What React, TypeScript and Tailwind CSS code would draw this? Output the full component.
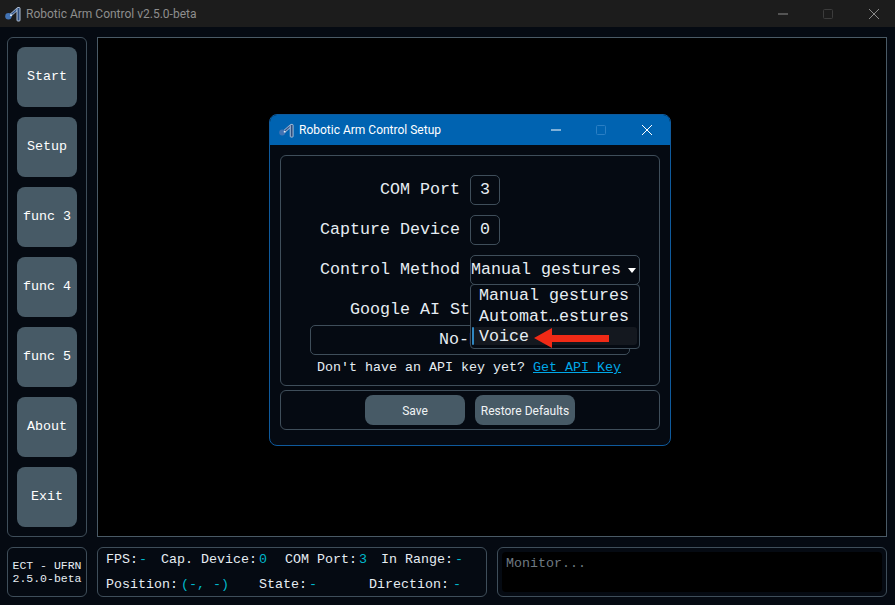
import React from "react";

const sideButtons = ["Start", "Setup", "func 3", "func 4", "func 5", "About", "Exit"];

function ArmIcon({ className }: { className?: string }) {
  return (
    <svg viewBox="0 0 16 16" className={className} fill="none">
      <path d="M4 10.5 L12.5 3" stroke="#a9bcd6" strokeWidth="3" />
      <path d="M4 10.5 L12.5 3" stroke="#34568a" strokeWidth="1.4" />
      <rect x="12" y="1.5" width="3" height="13.5" rx="0.8" fill="#2d4d7e" stroke="#c3d2e6" strokeWidth="0.9" />
      <circle cx="3.4" cy="10.2" r="3.2" fill="#4273b4" />
      <circle cx="6" cy="9.2" r="1" fill="#e6edf5" />
    </svg>
  );
}

function WindowControls({ color, dim, maxLeft, closeLeft }: { color: string; dim: string; maxLeft: string; closeLeft: string }) {
  return (
    <div className="ml-auto flex items-center">
      <svg viewBox="0 0 10 10" className="h-[10px] w-[10px]">
        <path d="M0 5 H10" stroke={color} strokeWidth="1" />
      </svg>
      <svg viewBox="0 0 10 10" className={`h-[10px] w-[10px] ${maxLeft}`}>
        <rect x="0.5" y="0.5" width="9" height="9" rx="1" fill="none" stroke={dim} strokeWidth="1" />
      </svg>
      <svg viewBox="0 0 10 10" className={`h-[10px] w-[10px] ${closeLeft}`}>
        <path d="M0 0 L10 10 M10 0 L0 10" stroke={color} strokeWidth="1" />
      </svg>
    </div>
  );
}

function Stat({ label, value, className }: { label: string; value: string; className?: string }) {
  return (
    <div className={`flex gap-[1px] ${className ?? ""}`}>
      <span className="text-[#e6edf3]">{label}</span>
      <span className="text-[#00b8cc]">{value}</span>
    </div>
  );
}

function FormRow({ label, children }: { label: string; children: React.ReactNode }) {
  return (
    <div className="flex h-[30px] items-center">
      <div className="w-[189px] pr-[10px] text-right">{label}</div>
      {children}
    </div>
  );
}

export default function App() {
  return (
    <div
      className="relative flex h-[605px] w-[895px] flex-col overflow-hidden bg-[#050a12] text-[13.33px] text-[#e6edf3]"
      style={{ fontFamily: '"Liberation Mono", monospace' }}
    >
      {/* title bar */}
      <div className="flex h-[27px] shrink-0 items-center bg-[#1c1c1c] pl-[5px] pr-[16px] font-['Roboto',sans-serif] text-[12px] text-[#8e8e8e]">
        <ArmIcon className="h-[16px] w-[16px]" />
        <span className="ml-[5px]">Robotic Arm Control v2.5.0-beta</span>
        <WindowControls color="#8a8a8a" dim="#3c3c3c" maxLeft="ml-[35px]" closeLeft="ml-[36px]" />
      </div>

      {/* main */}
      <div className="flex flex-1 flex-col gap-[10px] pb-[8px] pl-[7px] pr-[8px] pt-[10px]">
        <div className="flex h-[500px] gap-[10px]">
          <div className="flex w-[80px] flex-col items-center gap-[10px] rounded-[6px] border border-[#3f4e5a] pt-[9px]">
            {sideButtons.map((b) => (
              <button key={b} className="h-[60px] w-[60px] rounded-[8px] bg-[#475a66] text-center text-white">
                {b}
              </button>
            ))}
          </div>
          <div className="flex-1 border border-[#4a5a66] bg-black" />
        </div>

        {/* bottom */}
        <div className="flex h-[50px] gap-[10px]">
          <div className="flex w-[80px] flex-col items-center justify-center rounded-[6px] border border-[#3f4e5a] text-[11.5px] leading-[13px] text-[#e6edf3]">
            <span>ECT - UFRN</span>
            <span>2.5.0-beta</span>
          </div>
          <div className="flex w-[390px] flex-col justify-between rounded-[6px] border border-[#3f4e5a] pb-[2px] pl-[8px] pt-[3px] leading-[18px]">
            <div className="flex">
              <Stat label="FPS:" value="-" className="w-[55px]" />
              <Stat label="Cap. Device:" value="0" className="w-[124px] gap-[2px]" />
              <Stat label="COM Port:" value="3" className="w-[96px] gap-[2px]" />
              <Stat label="In Range:" value="-" className="gap-[2px]" />
            </div>
            <div className="flex">
              <Stat label="Position:" value="(-, -)" className="w-[153px] gap-[3px]" />
              <Stat label="State:" value="-" className="w-[110px] gap-[2px]" />
              <Stat label="Direction:" value="-" className="gap-[4px]" />
            </div>
          </div>
          <div className="flex-1 rounded-[6px] border border-[#3f4e5a] p-[4px]">
            <div className="h-full rounded-[4px] bg-black px-[4px] py-[3px] leading-[18px] text-[#6f7a82]">Monitor...</div>
          </div>
        </div>
      </div>

      {/* setup dialog */}
      <div className="absolute left-[269px] top-[114px] flex h-[332px] w-[402px] flex-col overflow-hidden rounded-[8px] border border-[#0f5a9c] bg-[#050a12]">
        <div className="flex h-[30px] shrink-0 items-center bg-[#0063b1] pl-[9px] pr-[18px] font-['Roboto',sans-serif] text-[12px] text-white">
          <ArmIcon className="h-[15px] w-[15px]" />
          <span className="ml-[5px]">Robotic Arm Control Setup</span>
          <WindowControls color="#ffffff" dim="#2a7fc4" maxLeft="ml-[35px]" closeLeft="ml-[36px]" />
        </div>
        <div className="flex flex-1 flex-col gap-[4px] px-[10px] pt-[10px]">
          <div className="flex h-[231px] flex-col gap-[10px] rounded-[6px] border border-[#3f4e5a] pt-[19px] text-[16.67px] leading-none text-[#e6edf3]">
            <FormRow label="COM Port">
              <div className="flex h-[30px] w-[30px] items-center justify-center rounded-[5px] border border-[#3f4e5a]">3</div>
            </FormRow>
            <FormRow label="Capture Device">
              <div className="flex h-[30px] w-[30px] items-center justify-center rounded-[5px] border border-[#3f4e5a]">0</div>
            </FormRow>
            <FormRow label="Control Method">
              <div className="h-[30px] w-[170px]" />
            </FormRow>
            <div className="flex h-[30px] items-center justify-center">Google AI Studio API Key</div>
            <div className="-mt-[10px] ml-[29px] flex h-[30px] w-[320px] items-center justify-center rounded-[5px] border border-[#3f4e5a] pr-[2px]">
              No-Key
            </div>
            <div className="-mt-[6px] pr-[2px] text-center text-[13.33px] leading-[18px]">
              Don't have an API key yet? <span className="text-[#00a8e8] underline">Get API Key</span>
            </div>
          </div>
          <div className="flex h-[40px] items-center justify-center gap-[10px] rounded-[6px] border border-[#3f4e5a] font-['Roboto',sans-serif] text-[12px] text-[#f0f3f5]">
            <button className="h-[30px] w-[100px] rounded-[8px] bg-[#475a66] pt-[1px]">Save</button>
            <button className="h-[30px] w-[100px] rounded-[8px] bg-[#475a66] pt-[1px]">Restore Defaults</button>
          </div>
        </div>
      </div>

      {/* open combo box + popup */}
      <div className="absolute left-[470px] top-[255px] flex h-[30px] w-[170px] items-center rounded-[5px] border border-[#3f4e5a] bg-[#050a12] text-[16.67px] leading-none">
        <span className="flex-1 whitespace-nowrap">Manual gestures</span>
        <svg viewBox="0 0 8 5" className="mr-[3px] h-[5px] w-[8px] shrink-0">
          <path d="M0 0 H8 L4 5 Z" fill="#ffffff" />
        </svg>
      </div>
      <div className="absolute left-[470px] top-[284px] flex h-[65px] w-[170px] flex-col rounded-[4px] border border-[#3f4e5a] bg-[#050a12] text-[16.67px] leading-[21px]">
        <div className="pl-[8px]">Manual gestures</div>
        <div className="pl-[8px]">Automat…estures</div>
        <div className="relative mx-[2px] h-[18px] rounded-[3px] bg-[#14181f] pl-[6px] leading-[19px]">
          Voice
          <span className="absolute -left-[1px] top-0 h-[18px] w-[2px] rounded bg-[#2f86c0]" />
        </div>
      </div>

      {/* red annotation arrow */}
      <svg viewBox="0 0 75 20" className="absolute left-[534px] top-[328px] h-[20px] w-[75px]">
        <path d="M0 10 L18 0 L18 7 L75 7 L75 14 L18 14 L18 20 Z" fill="#f02a16" />
      </svg>
    </div>
  );
}
